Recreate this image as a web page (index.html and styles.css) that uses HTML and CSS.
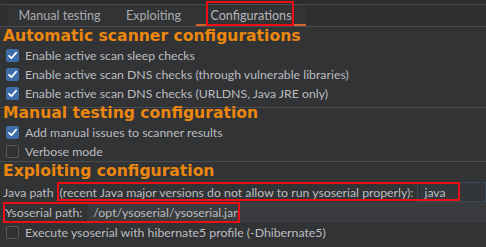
FILE: index.html
```html
<!DOCTYPE html>
<html>
<head>
<meta charset="utf-8">
<link rel="stylesheet" href="styles.css">
</head>
<body>
<div class="topstrip"></div>
<nav class="tabbar">
  <div class="tabs">
    <div class="tab t1">Manual testing</div>
    <div class="tab t2">Exploiting</div>
    <div class="tab t3 active">Configurations<span class="mark mark-tab"></span></div>
  </div>
</nav>
<section class="sec sec1">
  <h2 class="head">Automatic scanner configurations</h2>
  <div class="row"><span class="cb on"><svg viewBox="0 0 13 13" width="13" height="13"><path d="M3 6.8 L5.4 9.2 L10.2 3.6" fill="none" stroke="#fff" stroke-width="1.7" stroke-linecap="round" stroke-linejoin="round"/></svg></span><span class="lbl">Enable active scan sleep checks</span></div>
  <div class="row"><span class="cb on"><svg viewBox="0 0 13 13" width="13" height="13"><path d="M3 6.8 L5.4 9.2 L10.2 3.6" fill="none" stroke="#fff" stroke-width="1.7" stroke-linecap="round" stroke-linejoin="round"/></svg></span><span class="lbl">Enable active scan DNS checks (through vulnerable libraries)</span></div>
  <div class="row"><span class="cb on"><svg viewBox="0 0 13 13" width="13" height="13"><path d="M3 6.8 L5.4 9.2 L10.2 3.6" fill="none" stroke="#fff" stroke-width="1.7" stroke-linecap="round" stroke-linejoin="round"/></svg></span><span class="lbl">Enable active scan DNS checks (URLDNS, Java JRE only)</span></div>
</section>
<section class="sec sec2">
  <h2 class="head">Manual testing configuration</h2>
  <div class="row"><span class="cb on"><svg viewBox="0 0 13 13" width="13" height="13"><path d="M3 6.8 L5.4 9.2 L10.2 3.6" fill="none" stroke="#fff" stroke-width="1.7" stroke-linecap="round" stroke-linejoin="round"/></svg></span><span class="lbl">Add manual issues to scanner results</span></div>
  <div class="row"><span class="cb"></span><span class="lbl">Verbose mode</span></div>
</section>
<section class="sec sec3">
  <h2 class="head">Exploiting configuration</h2>
  <div class="field java">
    <span class="flabel">Java path</span>
    <span class="fnote">(recent Java major versions do not allow to run ysoserial properly):</span>
    <span class="input focus">java</span>
    <span class="mark mark-java"></span>
  </div>
  <div class="field yso">
    <span class="flabel">Ysoserial path:</span>
    <span class="input">/opt/ysoserial/ysoserial.jar</span>
    <span class="mark mark-yso"></span>
  </div>
  <div class="row"><span class="cb"></span><span class="lbl">Execute ysoserial with hibernate5 profile (-Dhibernate5)</span></div>
</section>
</body>
</html>
```
FILE: styles.css
```css
html, body {
  margin: 0;
  padding: 0;
}
body {
  width: 486px;
  height: 247px;
  overflow: hidden;
  background: #323335;
  color: #bbbdc0;
  font-family: Lato, "Noto Sans", sans-serif;
  font-size: 12.3px;
}
.topstrip {
  height: 4px;
  background: #2b2c2e;
  border-bottom: 1px solid #474a4d;
}
.tabbar {
  height: 21px;
  background: #2e2f31;
  border-bottom: 1px solid #4a4c4f;
  padding-left: 8px;
  display: flex;
}
.tabs {
  display: flex;
  background: #323335;
}
.tab {
  position: relative;
  height: 21px;
  line-height: 21px;
  text-align: center;
  color: #a9abaf;
  font-size: 12.6px;
}
.t1 { width: 103px; }
.t2 { width: 85px; }
.t3 { width: 110px; }
.tab.active {
  box-shadow: inset 0 -2px #d5652e;
  color: #b5b7ba;
}
.mark {
  position: absolute;
  border: 2px solid #ee0d15;
  box-sizing: border-box;
  pointer-events: none;
}
.mark-tab {
  left: 10px;
  top: -4px;
  width: 88px;
  height: 25px;
}
.head {
  position: relative;
  margin: 0;
  padding-left: 3px;
  font-family: "DejaVu Sans", sans-serif;
  font-weight: bold;
  font-size: 15.6px;
  line-height: 19px;
  color: #eb870f;
}
.sec {
  border-top: 1px solid #4a4c4f;
}
.sec1 { border-top: 0; padding-bottom: 4px; }
.sec2 .head { margin-top: -4px; }
.row {
  display: flex;
  align-items: center;
  height: 19px;
}
.cb {
  width: 13px;
  height: 13px;
  box-sizing: border-box;
  margin-left: 6px;
  margin-right: 6px;
  border-radius: 2px;
  border: 1px solid #56595d;
  background: #2f3133;
  display: flex;
}
.cb.on {
  background: #3d6ea9;
  border-color: #3d6ea9;
}
.cb svg {
  margin: -1px;
}
.field {
  position: relative;
  display: flex;
  align-items: stretch;
}
.java {
  margin-top: 1px;
  height: 20px;
}
.yso {
  height: 21px;
}
.flabel {
  display: flex;
  align-items: center;
  padding-left: 3px;
}
.fnote {
  display: flex;
  align-items: center;
  margin-left: 6px;
  margin-right: 4px;
}
.input {
  flex: 1;
  display: flex;
  align-items: center;
  padding-left: 6px;
  background: #393b3e;
}
.input.focus {
  background: #323539;
  border: 1px solid #3c4855;
}
.yso .flabel { padding-left: 5px; }
.yso .input {
  margin-left: 4px;
  border-left: 1px solid #2c2d2f;
}
.mark-java {
  left: 57px;
  top: 0;
  width: 403px;
  height: 19px;
}
.mark-yso {
  left: 3px;
  top: 0;
  width: 237px;
  height: 21px;
}
```
